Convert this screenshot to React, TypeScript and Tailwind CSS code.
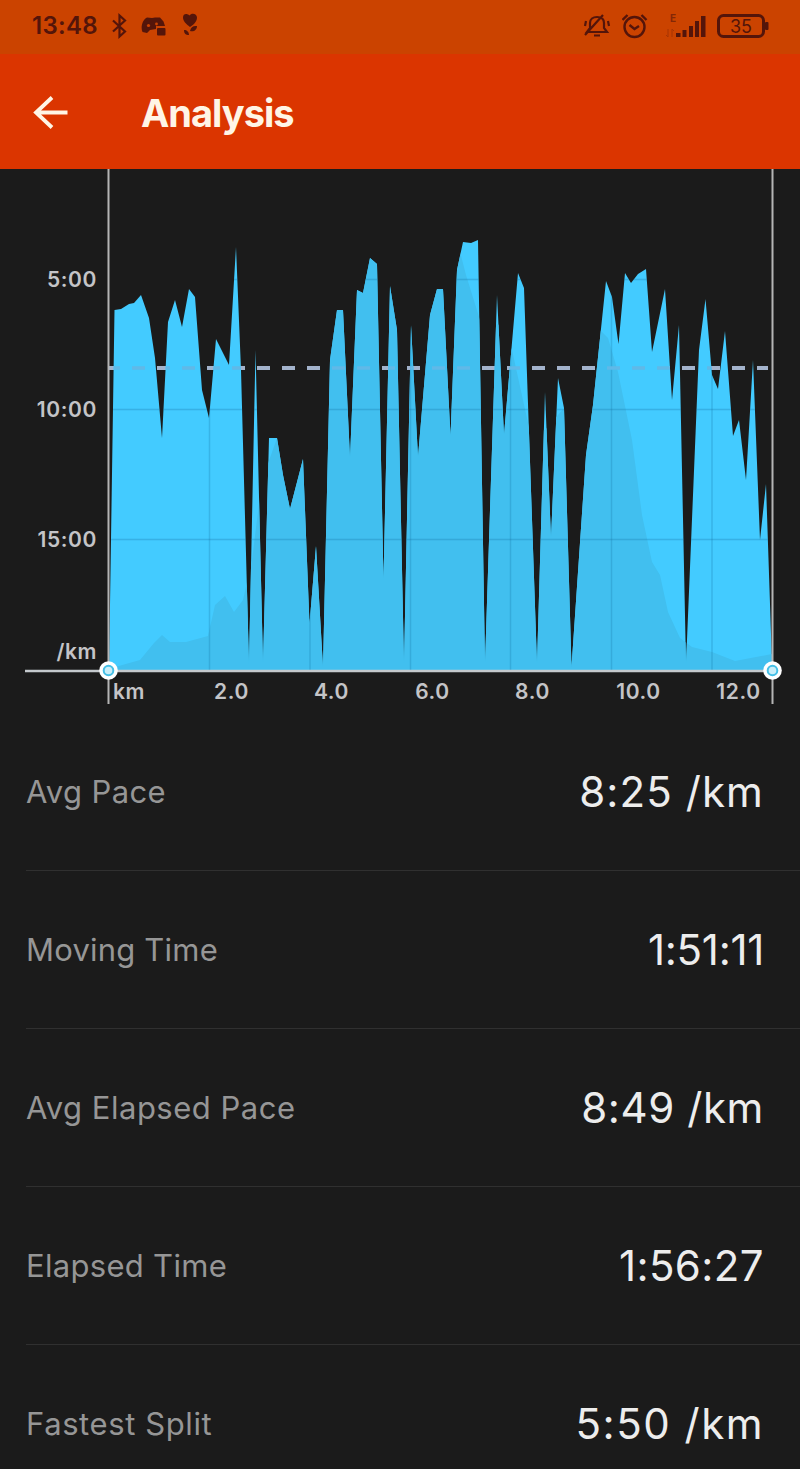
import React from 'react';

interface Stat {
  label: string;
  value: string;
  labelClass: string;
  valueClass: string;
}

const stats: Stat[] = [
  { label: 'Avg Pace', value: '8:25 /km', labelClass: 'tracking-[0.4px]', valueClass: 'tracking-[1.1px]' },
  { label: 'Moving Time', value: '1:51:11', labelClass: 'tracking-[0.2px]', valueClass: 'tracking-[-0.3px]' },
  { label: 'Avg Elapsed Pace', value: '8:49 /km', labelClass: 'tracking-[0.5px]', valueClass: 'tracking-[0.6px]' },
  { label: 'Elapsed Time', value: '1:56:27', labelClass: 'tracking-[0.3px]', valueClass: 'tracking-[0.4px]' },
  { label: 'Fastest Split', value: '5:50 /km', labelClass: 'tracking-[0.6px]', valueClass: 'tracking-[1.5px]' },
];

const PACE =
  '109,670 114.5,310 121,309 129,304 134,303 141,295 149,318 155,358 162,438 168,322 175,300 182,327 189,289 195,297 202,390 209,418 216,339 229,365 236,247 241,370 249,664 255.5,350 263,663 269,438 277,438 283,475 290,509 303,459 309.5,624 316,546 323,667 330,360 337,310 343,310 350,458 357,290 363,293 370,258 377,264 383.5,580 390,286 397,330 404,664 411,325 418,457 430,315 437,289 443,289 450.5,436 457,270 463,242 471,243 478,240 485,664 497,295 504,435 518,273 524,288 537,664 545,392 551,538 558,378 564,408 571.5,667 586,455 593,405 606,281 612,297 618.5,344 625,273 631,283 638,274 646,269 652,352 665,289 672,400 679,325 686,664 699,350 705.5,299 712,375 718,389 725,331 733,436 739,420 746,480 753,360 760,540 766,484 772,664 772,670';

const ELEVATION =
  '108,669 140,660 154,643 162,635 170,642 186,642 208,636 215,605 225,596 234,612 243,600 252,560 262,480 280,430 300,400 325,300 350,240 457,240 466,275 480,320 500,325 512,350 530,432 545,430 571,400 600,330 608,338 618,372 632,440 642,515 652,562 660,575 668,612 680,638 692,647 712,652 735,661 772,654 772,670 108,670';

const verticals = [209.5, 310, 410.5, 510.5, 611.5, 712];
const horizontals = [279.5, 409.5, 539.5];

const yLabels = [
  { text: '5:00', y: 287 },
  { text: '10:00', y: 417 },
  { text: '15:00', y: 547 },
  { text: '/km', y: 659 },
];

const xLabels = [
  { text: 'km', x: 129 },
  { text: '2.0', x: 231.5 },
  { text: '4.0', x: 331.5 },
  { text: '6.0', x: 432.5 },
  { text: '8.0', x: 532.5 },
  { text: '10.0', x: 638.5 },
  { text: '12.0', x: 738.5 },
];

const StatusBar = () => (
  <div className="flex h-[54px] shrink-0 items-center justify-between bg-[#cb4300] pr-[31px] pb-0.5 pl-8 text-[#54150a]">
    <div className="flex items-center">
      <span className="w-[68px] text-[24px] leading-none font-semibold tracking-[0.3px]">13:48</span>
      <svg className="ml-2.5" width="19" height="26" viewBox="0 0 19 26" fill="none" stroke="currentColor" strokeWidth="2.2">
        <path d="M3 7.500l12 11-5.500 5V2.500l5.500 5-12 11" />
      </svg>
      <svg className="ml-3" width="25" height="22" viewBox="0 0 25 22" fill="currentColor">
        <path d="M6 2.500l5 .5 3-.5h5l3.500 4L24 11h-9v3l-6 1-3 3-4.500-1C-.5 13 1 5 6 2.500z" />
        <rect x="16" y="13" width="8.500" height="7.500" rx="1" />
        <circle cx="7.500" cy="10.500" r="1.6" fill="#cb4300" />
        <circle cx="15.500" cy="9" r="1.4" fill="#cb4300" />
      </svg>
      <svg className="mb-1 ml-[15px]" width="18" height="25" viewBox="0 0 18 25" fill="currentColor">
        <path d="M9 15C5 12 2 9 2 5.500c0-4 4-4.500 6.500-2 2-3 7.500-2 7.500 2 0 4-3 7-7 9.500z" />
        <path d="M9 19c1-4 3-5.500 7-5 0 4-3 6-7 5zM3 18c3 0 5 2 5 5-3 0-5-1-5-5z" />
      </svg>
    </div>
    <div className="flex items-center">
      <svg className="-ml-1" width="29" height="28" viewBox="0 0 29 28" fill="none" stroke="currentColor" strokeWidth="2.200">
        <path d="M4 20h20l-3-4v-5c0-4-3-6-7-6s-7 2-7 6v5zM11 23.500h6M2 23L20 3M3 9l-1 5M25 9l1 5" />
      </svg>
      <svg className="ml-2.5" width="27" height="28" viewBox="0 0 27 28" fill="none" stroke="currentColor" strokeWidth="2.4">
        <circle cx="12.5" cy="15" r="10" />
        <path d="M7.500 13l5 4 4.500-3M.5 8l5-5M24.500 8l-5-5" />
      </svg>
      <svg className="ml-4" width="44" height="28" viewBox="0 0 44 28" fill="currentColor">
        <text x="5" y="10" fontSize="10" fontWeight="700" opacity="0.6">E</text>
        <path d="M3 17v8M1 23l2 2M7 25v-8M7 17l2 2" stroke="currentColor" opacity="0.3" />
        <rect x="11" y="21" width="4.500" height="4" />
        <rect x="17.500" y="18" width="4" height="7" />
        <rect x="24" y="14" width="4" height="11" />
        <rect x="30" y="9" width="4" height="16" />
        <rect x="36" y="4" width="4.500" height="21" />
      </svg>
      <svg className="ml-2" width="52" height="26" viewBox="0 0 52 26">
        <rect x="1.500" y="2.500" width="45" height="21" rx="5" fill="none" stroke="currentColor" strokeWidth="3" />
        <rect x="48" y="9" width="3.500" height="8" rx="1" fill="currentColor" />
        <text x="24" y="19.500" textAnchor="middle" fontSize="18" fill="currentColor">35</text>
      </svg>
    </div>
  </div>
);

const Header = () => (
  <header className="flex h-[115px] shrink-0 items-center bg-[#db3500] pl-8 text-[#fff5e6]">
    <button type="button" aria-label="Back">
      <svg width="38" height="36" viewBox="0 0 38 36" fill="none" stroke="currentColor" strokeWidth="3.800">
        <path d="M35.500 18.500H4M20 3.500l-16 15 16 15" />
      </svg>
    </button>
    <h1 className="ml-[71px] pt-0.5 text-[38px] leading-none font-bold tracking-[-1px]">Analysis</h1>
  </header>
);

const Handle = ({ x }: { x: number }) => (
  <g>
    <circle cx={x} cy="670.5" r="9.3" fill="#fff" />
    <circle cx={x} cy="670.5" r="4.8" fill="#c9eef9" stroke="#45bfe6" strokeWidth="2" />
  </g>
);

const PaceChart = () => (
  <svg className="block shrink-0" width="800" height="544" viewBox="0 169 800 544">
    <defs>
      <clipPath id="pace">
        <polygon points={PACE} />
      </clipPath>
    </defs>
    <path d="M109 368H768" stroke="#a3b3cc" strokeWidth="4" strokeDasharray="13 12" strokeDashoffset="2" />
    <polygon points={PACE} fill="#43cbff" />
    <g clipPath="url(#pace)">
      <polygon points={ELEVATION} fill="#41bfef" />
      {horizontals.map((y) => (
        <path key={y} d={`M108 ${y}H772`} stroke="#146fa0" strokeOpacity="0.28" strokeWidth="1.5" />
      ))}
      {verticals.map((x) => (
        <path key={x} d={`M${x} 169V670`} stroke="#146fa0" strokeOpacity="0.25" strokeWidth="1.5" />
      ))}
      <path d="M109 368H768" stroke="#60b9e8" strokeWidth="3.5" strokeDasharray="13 12" strokeDashoffset="2" />
    </g>
    <path d="M108.500 169V704M772.500 169V704" stroke="#b5b5b5" strokeWidth="2" />
    <path d="M25 671H772" stroke="#c4c9cd" strokeWidth="2.600" />
    <Handle x={108.5} />
    <Handle x={772.5} />
    <g fill="#c4c4c7" fontSize="21" fontWeight="600" letterSpacing="0.6">
      {yLabels.map((l) => (
        <text key={l.text} x="97" y={l.y} textAnchor="end">
          {l.text}
        </text>
      ))}
      {xLabels.map((l) => (
        <text key={l.text} x={l.x} y="699" textAnchor="middle">
          {l.text}
        </text>
      ))}
    </g>
  </svg>
);

const StatRow = ({ label, value, labelClass, valueClass }: Stat) => (
  <li className="flex h-[158px] shrink-0 items-center justify-between border-b border-[#303030] pr-9">
    <span className={`pt-0.5 text-[31px] text-[#969696] ${labelClass}`}>{label}</span>
    <span className={`text-[42px] text-[#ededed] ${valueClass}`}>{value}</span>
  </li>
);

const App = () => (
  <div className="flex h-[1469px] w-[800px] flex-col overflow-hidden bg-[#1b1b1b] font-['Inter','Roboto',sans-serif]">
    <StatusBar />
    <Header />
    <PaceChart />
    <ul className="flex flex-col pl-[26px]">
      {stats.map((stat) => (
        <StatRow key={stat.label} {...stat} />
      ))}
    </ul>
  </div>
);

export default App;
